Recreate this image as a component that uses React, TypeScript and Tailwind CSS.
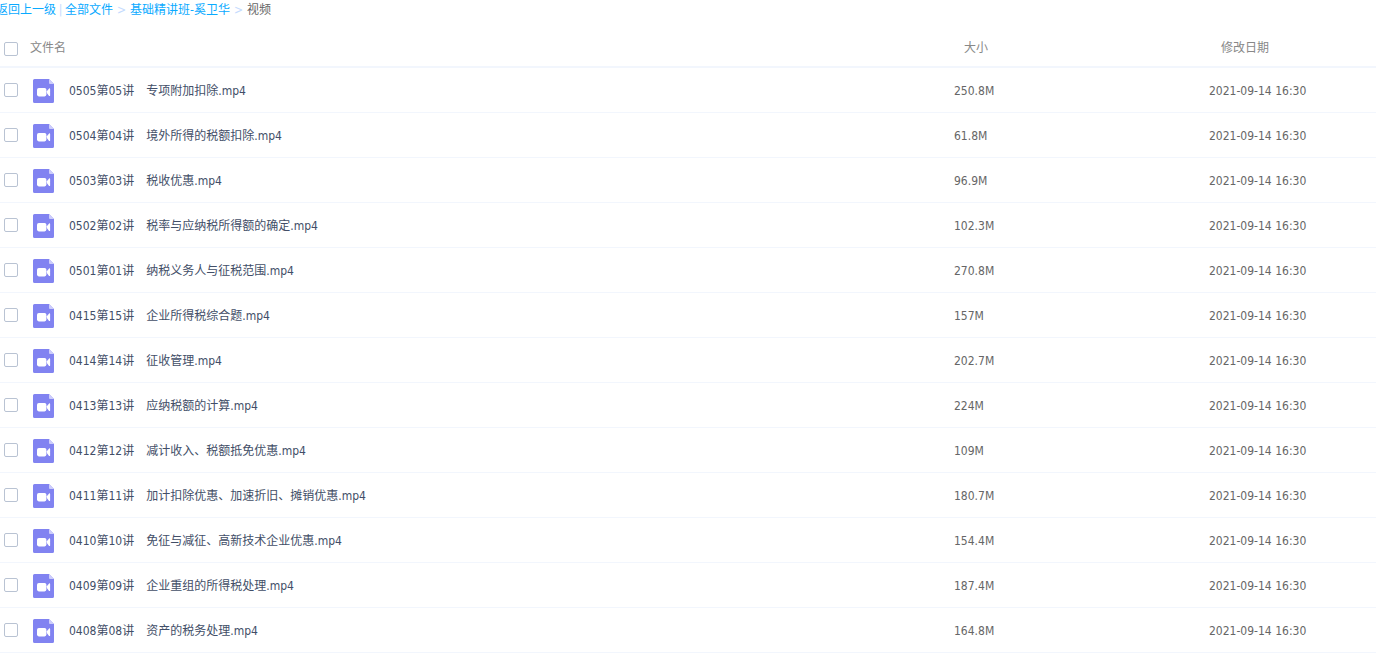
const files = [
  { name: "0505第05讲　专项附加扣除.mp4", size: "250.8M", date: "2021-09-14 16:30" },
  { name: "0504第04讲　境外所得的税额扣除.mp4", size: "61.8M", date: "2021-09-14 16:30" },
  { name: "0503第03讲　税收优惠.mp4", size: "96.9M", date: "2021-09-14 16:30" },
  { name: "0502第02讲　税率与应纳税所得额的确定.mp4", size: "102.3M", date: "2021-09-14 16:30" },
  { name: "0501第01讲　纳税义务人与征税范围.mp4", size: "270.8M", date: "2021-09-14 16:30" },
  { name: "0415第15讲　企业所得税综合题.mp4", size: "157M", date: "2021-09-14 16:30" },
  { name: "0414第14讲　征收管理.mp4", size: "202.7M", date: "2021-09-14 16:30" },
  { name: "0413第13讲　应纳税额的计算.mp4", size: "224M", date: "2021-09-14 16:30" },
  { name: "0412第12讲　减计收入、税额抵免优惠.mp4", size: "109M", date: "2021-09-14 16:30" },
  { name: "0411第11讲　加计扣除优惠、加速折旧、摊销优惠.mp4", size: "180.7M", date: "2021-09-14 16:30" },
  { name: "0410第10讲　免征与减征、高新技术企业优惠.mp4", size: "154.4M", date: "2021-09-14 16:30" },
  { name: "0409第09讲　企业重组的所得税处理.mp4", size: "187.4M", date: "2021-09-14 16:30" },
  { name: "0408第08讲　资产的税务处理.mp4", size: "164.8M", date: "2021-09-14 16:30" },
];

const VideoIcon = () => (
  <svg className="h-6 w-[21px] shrink-0" viewBox="0 0 21 24" aria-hidden="true">
    <path fill="#8183f1" d="M1.5 0H16l5 5v17.5a1.5 1.5 0 0 1-1.5 1.5h-18A1.5 1.5 0 0 1 0 22.5v-21A1.5 1.5 0 0 1 1.5 0z" />
    <path fill="#cdcdfb" d="M16 0l5 5h-4a1 1 0 0 1-1-1z" />
    <rect x="4" y="9" width="9.4" height="8.4" rx="1.8" fill="#fff" />
    <path fill="#fff" d="M13.8 12.3l2.3-2.8c.4-.4 1-.2 1 .4v6.6c0 .6-.6.8-1 .4l-2.3-2.8z" />
  </svg>
);

const Checkbox = ({ label }: { label: string }) => (
  <input
    type="checkbox"
    aria-label={label}
    className="block h-3.5 w-3.5 appearance-none rounded-xs border border-[#b9c3d3] bg-white checked:bg-[#09aaff]"
  />
);

const Breadcrumb = () => (
  <nav aria-label="路径" className="-ml-1 flex h-5 items-center whitespace-nowrap text-[#09aaff]">
    <a href="#" className="hover:underline">返回上一级</a>
    <span className="w-[9px] text-center text-[#c4dbfe]">|</span>
    <a href="#" className="hover:underline">全部文件</a>
    <span className="w-[17px] text-center text-[#c4dbfe]">&gt;</span>
    <a href="#" className="hover:underline">基础精讲班-奚卫华</a>
    <span className="w-[17px] text-center text-[#c4dbfe]">&gt;</span>
    <span className="text-[#666]">视频</span>
  </nav>
);

export default function App() {
  return (
    <main className="min-h-screen overflow-hidden bg-white font-['DejaVu_Sans_Condensed','Noto_Sans','Noto_Sans_CJK_SC',sans-serif] text-xs">
      <Breadcrumb />
      <table className="mt-2 w-full table-fixed border-separate border-spacing-0 text-left">
        <colgroup>
          <col className="w-[30px]" />
          <col />
          <col className="w-[255px]" />
          <col className="w-[167px]" />
        </colgroup>
        <thead>
          <tr className="h-10 text-[#888] *:border-b-2 *:border-[#f2f6fd]">
            <th className="pt-1 pl-1">
              <Checkbox label="全选" />
            </th>
            <th className="pt-0.5 font-normal">文件名</th>
            <th className="pt-0.5 pl-[10px] font-normal">大小</th>
            <th className="pt-0.5 pl-3 font-normal">修改日期</th>
          </tr>
        </thead>
        <tbody>
          {files.map((file) => (
            <tr key={file.name} className="h-[45px] text-[#666] *:border-b *:border-[#f2f6fd] hover:bg-[#f4fbff]">
              <td className="pl-1">
                <Checkbox label={file.name} />
              </td>
              <td className="pt-0.5 pl-[3px]">
                <div className="flex items-center gap-[15px]">
                  <VideoIcon />
                  <a href="#" className="truncate text-[#424e67] hover:text-[#09aaff]">
                    {file.name}
                  </a>
                </div>
              </td>
              <td className="pt-0.5">{file.size}</td>
              <td className="pt-0.5">{file.date}</td>
            </tr>
          ))}
        </tbody>
      </table>
    </main>
  );
}
